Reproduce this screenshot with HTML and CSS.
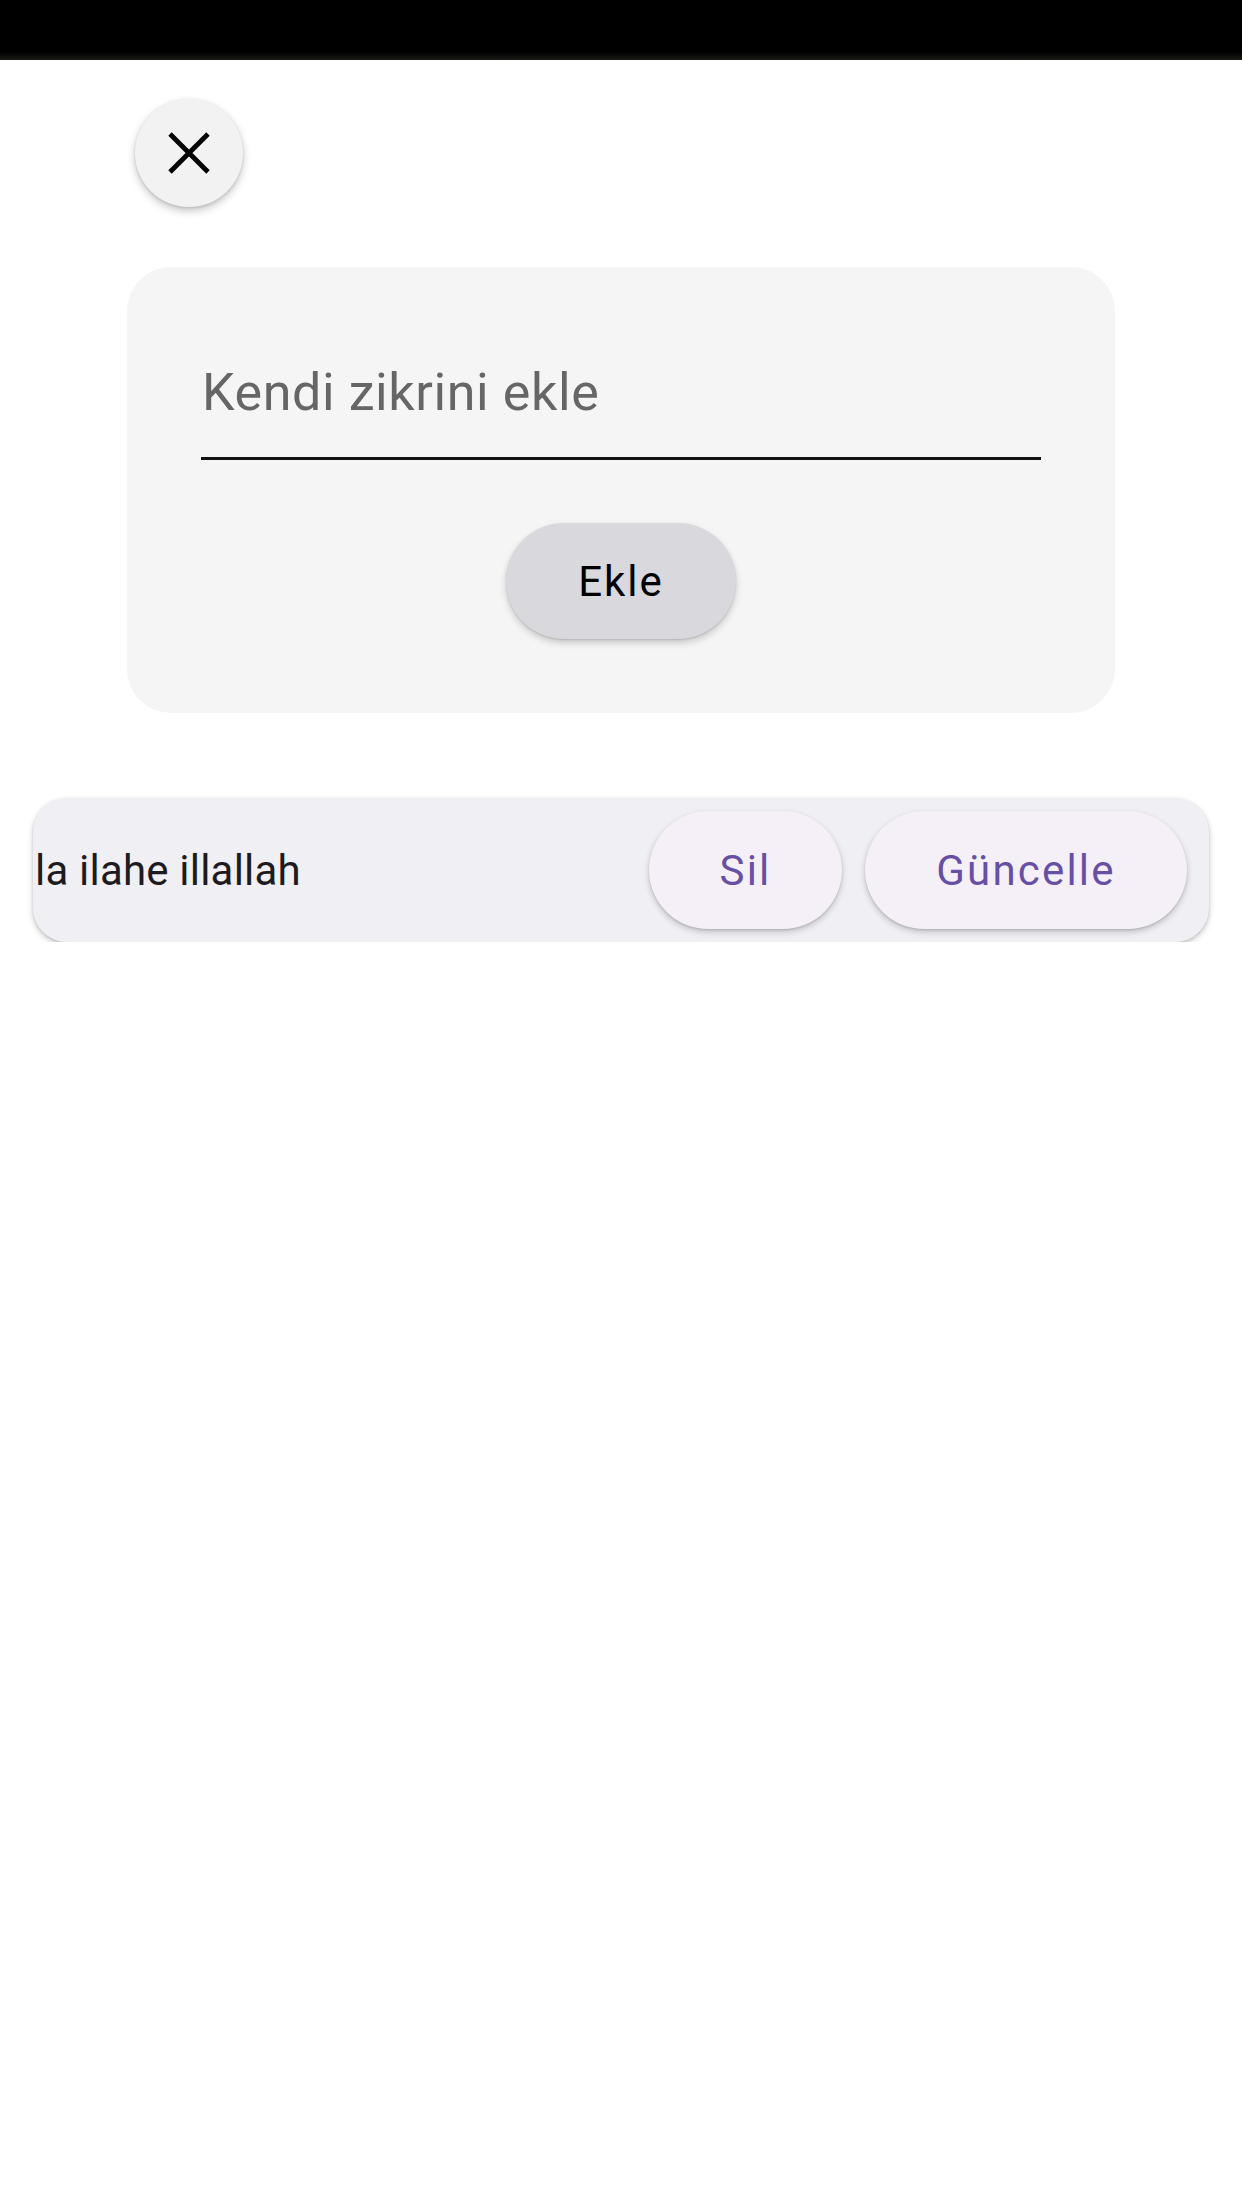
FILE: index.html
```html
<!DOCTYPE html>
<html lang="tr">
<head>
<meta charset="utf-8">
<title>Zikir</title>
<link rel="stylesheet" href="styles.css">
</head>
<body>
<div class="status-bar"></div>
<main class="page">
  <button class="close-btn" aria-label="Kapat">
    <svg width="42" height="42" viewBox="0 0 42 42" aria-hidden="true">
      <path d="M2 2 L40 40 M40 2 L2 40" stroke="#000" stroke-width="4.8" fill="none"/>
    </svg>
  </button>

  <section class="add-card">
    <div class="field">
      <span class="placeholder">Kendi zikrini ekle</span>
    </div>
    <div class="add-actions">
      <button class="btn btn-add">Ekle</button>
    </div>
  </section>

  <section class="item-card">
    <span class="item-text">la ilahe illallah</span>
    <div class="item-actions">
      <button class="btn btn-tonal btn-sil">Sil</button>
      <button class="btn btn-tonal btn-update">Güncelle</button>
    </div>
  </section>
</main>
</body>
</html>
```

FILE: styles.css
```css
html, body {
  margin: 0;
  padding: 0;
  background: #ffffff;
  font-family: Roboto, "Noto Sans", "Liberation Sans", sans-serif;
}

.status-bar {
  height: 60px;
  background: linear-gradient(to bottom, #000 0, #000 52px, #1a1815 60px);
}

.page {
  display: flex;
  flex-direction: column;
  align-items: flex-start;
}

.close-btn {
  margin: 39px 0 0 135px;
  width: 108px;
  height: 108px;
  border-radius: 50%;
  border: none;
  background: #f2f2f2;
  box-shadow: 0 4px 8px rgba(0, 0, 0, 0.22), 0 1px 3px rgba(0, 0, 0, 0.12);
  display: flex;
  align-items: center;
  justify-content: center;
  padding: 0;
}

.add-card {
  box-sizing: border-box;
  margin: 60px 0 0 127px;
  width: 988px;
  height: 446px;
  background: #f5f5f5;
  border-radius: 44px;
  padding: 95px 74px 0 74px;
}

.field {
  height: 95px;
  border-bottom: 3px solid #111;
  display: flex;
  align-items: flex-start;
  padding-left: 1px;
}

.placeholder {
  font-size: 52px;
  line-height: 62px;
  color: #666666;
  letter-spacing: 0.6px;
}

.add-actions {
  display: flex;
  justify-content: center;
  margin-top: 63px;
}

.btn {
  border: none;
  font-family: Roboto, "Noto Sans", "Liberation Sans", sans-serif;
  font-size: 42px;
  font-weight: 400;
  letter-spacing: 1.2px;
  height: 116px;
  border-radius: 58px;
  padding: 0;
  display: flex;
  align-items: center;
  justify-content: center;
}

.btn-add {
  width: 230px;
  background: #d9d8dd;
  color: #000;
  letter-spacing: 2px;
  box-shadow: 0 4px 7px rgba(0, 0, 0, 0.18), 0 1px 2px rgba(0, 0, 0, 0.12);
}

.item-card {
  box-sizing: border-box;
  margin: 85px 0 0 33px;
  width: 1176px;
  height: 144px;
  background: #f0eff4;
  border-radius: 34px;
  padding: 0 22px 0 2px;
  display: flex;
  align-items: center;
  justify-content: space-between;
  box-shadow: 0 3px 6px rgba(0, 0, 0, 0.2), 0 1px 3px rgba(0, 0, 0, 0.1);
}

.item-text {
  font-size: 42px;
  color: #1d1b20;
  letter-spacing: 0.2px;
}

.item-actions {
  display: flex;
  gap: 23px;
}

.btn-tonal {
  height: 118px;
  border-radius: 59px;
  background: #f5f0f7;
  color: #6750a4;
  font-weight: 400;
  letter-spacing: 2.2px;
  box-shadow: 0 3px 6px rgba(0, 0, 0, 0.2), 0 1px 2px rgba(0, 0, 0, 0.12);
}

.btn-sil { width: 193px; }
.btn-update { width: 322px; }
```
